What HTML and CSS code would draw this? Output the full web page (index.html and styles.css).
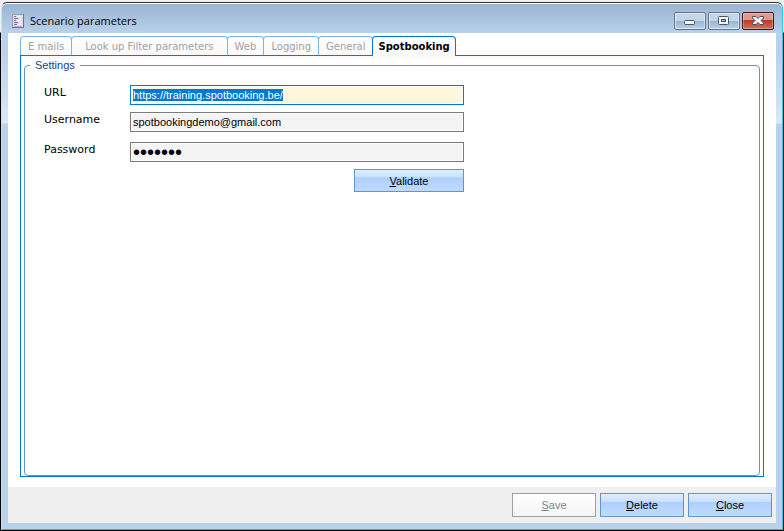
FILE: index.html
```html
<!DOCTYPE html>
<html lang="en">
<head>
  <meta charset="UTF-8">
  <meta name="viewport" content="width=device-width, initial-scale=1.0">
  <title>Scenario parameters</title>
  <link rel="stylesheet" href="styles.css">
</head>
<body>
  <div class="window">
    <header class="title-bar">
      <svg class="title-icon" width="12" height="14" viewBox="0 0 12 14" shape-rendering="crispEdges" aria-hidden="true">
        <rect width="12" height="14" fill="#a29bb8"/>
        <rect x="1" y="1" width="10" height="12" fill="#dcdaec"/>
        <path d="M11 0h1v14H0v-1h11z" fill="#776d90"/>
        <path d="M2 2h2v1H2zM2 4h4v1H2zM2 6h2v1H2zM2 8h4v1H2zM2 10h3v1H2z" fill="#7b7698"/>
        <path d="M5 2h5v1H5zM7 4h2v1H7zM5 6h4v1H5zM7 8h3v1H7zM6 10h4v1H6z" fill="#f4f3fb"/>
        <path d="M2 12h8v1H2z" fill="#b5afcb"/>
      </svg>
      <h1 class="title">Scenario parameters</h1>
      <div class="window-controls">
        <button type="button" class="control" aria-label="Minimize">
          <svg width="30" height="16" viewBox="0 0 30 16" aria-hidden="true">
            <rect x="9.500" y="7.500" width="10" height="4" rx="1" fill="#f4f4f4" stroke="#4c5566"/>
          </svg>
        </button>
        <button type="button" class="control" aria-label="Maximize">
          <svg width="30" height="16" viewBox="0 0 30 16" aria-hidden="true">
            <rect x="9.500" y="3.500" width="10" height="8" rx="1" fill="#f4f4f4" stroke="#4c5566"/>
            <rect x="12.500" y="6.500" width="4" height="2" fill="#8db4d6" stroke="#4c5566"/>
          </svg>
        </button>
        <button type="button" class="control control-close" aria-label="Close window">
          <svg width="30" height="16" viewBox="0 0 30 16" aria-hidden="true">
            <path d="M9.500 3.500h3.500l2 2 2-2h3.500v1.500L18 7.500l2.500 2.500v1.500H17l-2-2-2 2H9.500V10L12 7.500 9.500 5z" fill="#f6f6f6" stroke="#53505c"/>
          </svg>
        </button>
      </div>
    </header>

    <form class="content" id="parameters-form">
      <main class="main">
        <div class="tabs" role="tablist">
          <button type="button" class="tab" role="tab" disabled>E mails</button>
          <button type="button" class="tab tab-wide" role="tab" disabled>Look up Filter parameters</button>
          <button type="button" class="tab" role="tab" disabled>Web</button>
          <button type="button" class="tab" role="tab" disabled>Logging</button>
          <button type="button" class="tab" role="tab" disabled>General</button>
          <button type="button" class="tab tab-active" role="tab" aria-selected="true">Spotbooking</button>
        </div>
        <section class="panel">
          <fieldset class="settings">
            <legend>Settings</legend>
            <div class="fields">
              <label for="url">URL</label>
              <input type="text" id="url" name="url" value="https://training.spotbooking.be/">
              <label for="username">Username</label>
              <input type="text" id="username" name="username" value="spotbookingdemo@gmail.com">
              <label for="password" class="spaced">Password</label>
              <input type="password" id="password" name="password" class="spaced" value="1234567">
              <button type="button" class="btn btn-validate"><u>V</u>alidate</button>
            </div>
          </fieldset>
        </section>
      </main>
      <footer class="footer">
        <button type="submit" class="btn" disabled><u>S</u>ave</button>
        <button type="button" class="btn"><u>D</u>elete</button>
        <button type="button" class="btn"><u>C</u>lose</button>
      </footer>
    </form>
  </div>

  <script>
    // Start on the first field with its text selected
    const url = document.getElementById('url');
    url.focus();
    url.select();
  </script>
</body>
</html>
```

FILE: styles.css
```css
* {
  box-sizing: border-box;
  margin: 0;
  padding: 0;
}

body {
  display: flex;
  height: 100vh;
  padding: 2px 1px 1px;
  font-family: "Liberation Sans", Arial, sans-serif;
  font-size: 11px;
  color: #000;
  background: linear-gradient(#f0f0f0 6px, #f0f0f0 32px, #000 33px);
}

button,
input {
  font: inherit;
  color: inherit;
}

/* Window frame */
.window {
  flex: 1;
  display: flex;
  flex-direction: column;
  min-width: 0;
  padding: 0 6px 6px;
  border: 1px solid #cfe0f0;
  border-top: 1px solid #333;
  border-right-color: #35c6e0;
  border-bottom-color: #35b6d0;
  border-radius: 6px 6px 0 0;
  background: linear-gradient(#99b4d1, #b9d1ea 30px, #b9d1ea 50px, #dce8f5 120px, #b9d1ea 121px);
  box-shadow: inset 0 1px #fff;
}

.title-bar {
  display: flex;
  align-items: center;
  height: 30px;
  padding: 6px 2px 0 4px;
}

.title {
  flex: 1;
  margin-left: 6px;
  font-family: "Open Sans", "Segoe UI", sans-serif;
  font-size: 11px;
  font-weight: normal;
  line-height: 16px;
}

.window-controls {
  display: flex;
  gap: 2px;
}

.control {
  display: flex;
  width: 32px;
  height: 18px;
  border: 1px solid #5f7490;
  border-radius: 2px;
  background: linear-gradient(#c3d5e8 50%, #98b4d0 50%, #b8d0e8);
  box-shadow: inset 0 0 0 1px rgba(255, 255, 255, 0.5);
}

.control-close {
  border-color: #431422;
  background: linear-gradient(#dc9a8c 45%, #b83a24 45%, #d2705c);
  box-shadow: inset 0 0 0 1px rgba(255, 255, 255, 0.3);
}

/* Client area */
.content {
  flex: 1;
  display: flex;
  flex-direction: column;
  min-height: 0;
}

.main {
  flex: 1;
  display: flex;
  flex-direction: column;
  padding: 3px 12px 10px;
  background: #fff;
}

/* Tabs */
.tabs {
  display: flex;
  font-family: "DejaVu Sans", Verdana, sans-serif;
  font-size: 10px;
}

.tab {
  height: 19px;
  margin-right: -1px;
  padding: 0 7px;
  border: 1px solid #77b5e8;
  border-bottom: 0;
  border-radius: 4px 4px 0 0;
  color: #a0a0a0;
  background: linear-gradient(#fff, #f9f9f9);
}

.tab-wide {
  padding: 0 13px;
}

.tab-active {
  position: relative;
  height: 20px;
  margin-bottom: -1px;
  padding: 0 5px;
  border-color: #0078d7;
  font-weight: bold;
  color: #000;
}

.panel {
  flex: 1;
  display: flex;
  padding: 3px 3px 0;
  border: 1px solid #0078d7;
  background: linear-gradient(#f9f9f9, #fff 4px);
}

/* Settings group */
.settings {
  flex: 1;
  min-width: 0;
  padding: 0 19px;
  border: 1px solid #6593cf;
  border-radius: 4px;
}

.settings legend {
  margin-left: -14px;
  padding: 0 5px;
  line-height: 13px;
  color: #15428b;
}

.fields {
  display: grid;
  grid-template-columns: 78px minmax(0, 334px);
  gap: 7px 8px;
  padding-top: 13px;
}

.fields label {
  font-family: "DejaVu Sans", Verdana, sans-serif;
  line-height: 16px;
}

.fields input {
  width: 100%;
  height: 20px;
  padding: 0 2px;
  border: 1px solid #7a7a7a;
  line-height: 16px;
  background: #f4f4f4;
  box-shadow: inset 0 0 0 1px #fff;
}

.fields input[type="password"] {
  font-size: 20px;
}

.fields input:focus {
  border-color: #0078d7;
  outline: none;
  background: #fff7dc;
}

.fields input::selection {
  color: #fff;
  background: #0078d7;
}

.fields .spaced {
  margin-top: 3px;
}

/* Buttons */
.btn {
  width: 84px;
  height: 24px;
  border: 1px solid #6593cf;
  background: linear-gradient(#e0edff, #c9dfff 35%, #add0ff 36%, #c0daff);
}

.btn:disabled {
  border-color: #a0a0a0;
  color: #838383;
  background: linear-gradient(#fff, #f4f4f4);
}

.btn-validate {
  grid-column: 2;
  justify-self: end;
  width: 110px;
  height: 23px;
}

.footer {
  display: flex;
  justify-content: flex-end;
  gap: 4px;
  padding: 6px 4px;
  background: #efefef;
}
```
